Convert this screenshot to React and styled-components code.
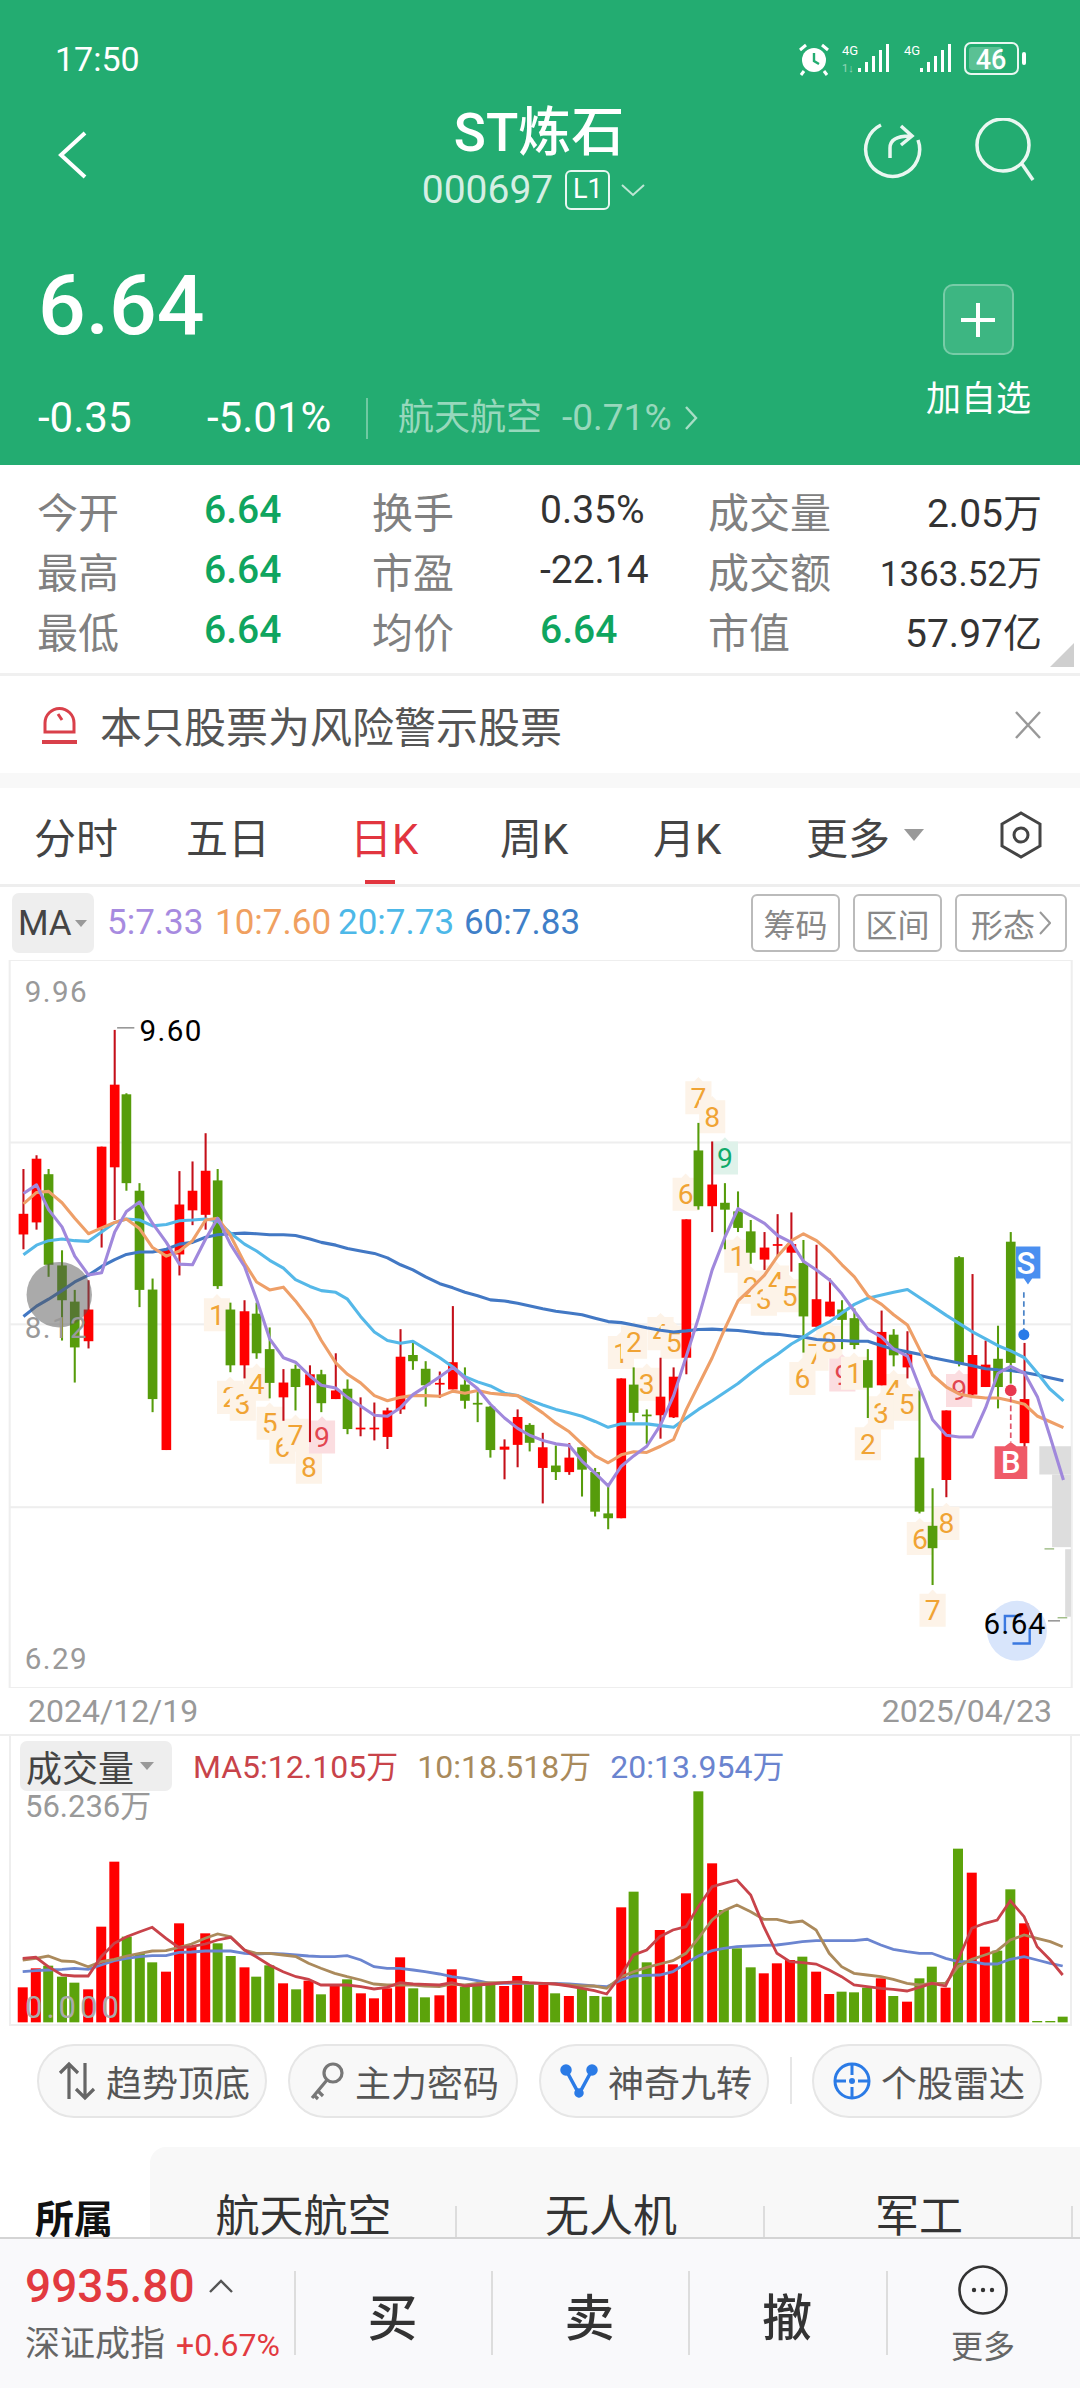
import React from "react"
import styled, { createGlobalStyle } from "styled-components"

const GlobalStyle = createGlobalStyle`
  html, body { margin: 0; padding: 0; background: #fff; }
  body { font-family: Roboto, "Noto Sans CJK SC", sans-serif; }
`

const colors = { green: "#23ac71", up: "#ff0000", down: "#569c0b", quoteGreen: "#0fa55f", label: "#808080", text: "#333" }

const Page = styled.div`
  width: 1080px;
  height: 2388px;
  overflow: hidden;
  display: flex;
  flex-direction: column;
  background: #fff;
`
const Header = styled.header`
  height: 465px;
  background: ${colors.green};
  color: #fff;
  flex: none;
`
const StatusBar = styled.div`
  height: 118px;
  padding: 0 50px 0 55px;
  display: flex;
  align-items: center;
  justify-content: space-between;
  font-size: 34px;
`
const NavRow = styled.div`
  height: 110px;
  position: relative;
  display: flex;
  justify-content: center;
`
const NavBack = styled.svg`
  position: absolute;
  left: 56px;
  top: 12px;
`
const NavActions = styled.div`
  position: absolute;
  right: 41px;
  top: 0;
  display: flex;
  gap: 48px;
`
const TitleBlock = styled.div`
  display: flex;
  flex-direction: column;
  align-items: center;
  margin-left: -2px;
`
const Title = styled.div`
  font-size: 53px;
  font-weight: 500;
  line-height: 30px;
  height: 30px;
`
const CodeRow = styled.div`
  display: flex;
  align-items: center;
  margin: 19px 0 0 -8px;
  font-size: 39px;
  line-height: 46px;
  color: rgba(255, 255, 255, 0.82);
`
const LevelTag = styled.span`
  margin-left: 12px;
  width: 45px;
  height: 40px;
  box-sizing: border-box;
  border: 2px solid rgba(255, 255, 255, 0.9);
  border-radius: 6px;
  font-size: 27px;
  line-height: 35px;
  text-align: center;
  color: #fff;
`
const QuoteRow = styled.div`
  display: flex;
  justify-content: space-between;
  padding: 36px 49px 0 38px;
`
const Price = styled.div`
  font-size: 84px;
  font-weight: 500;
  line-height: 84px;
`
const ChangeRow = styled.div`
  margin-top: 49px;
  display: flex;
  align-items: center;
  font-size: 42px;
  line-height: 42px;
`
const ChangeValue = styled.span`
  width: ${(p) => p.$w}px;
`
const SectorDivider = styled.span`
  width: 2px;
  height: 41px;
  background: rgba(255, 255, 255, 0.35);
  margin: 0 30px 0 31px;
`
const SectorName = styled.span`
  font-size: 36px;
  color: rgba(255, 255, 255, 0.55);
`
const SectorChange = styled.span`
  margin-left: 20px;
  font-size: 37px;
  color: rgba(255, 255, 255, 0.55);
`
const AddBlock = styled.div`
  display: flex;
  flex-direction: column;
  align-items: center;
  margin-top: 20px;
`
const AddButton = styled.div`
  width: 71px;
  height: 71px;
  box-sizing: border-box;
  border: 2px solid rgba(255, 255, 255, 0.3);
  border-radius: 10px;
  background: rgba(255, 255, 255, 0.12);
  display: flex;
  align-items: center;
  justify-content: center;
`
const AddLabel = styled.div`
  margin-top: 25px;
  font-size: 35px;
  line-height: 40px;
`

const StatGrid = styled.div`
  flex: none;
  height: 211px;
  box-sizing: border-box;
  padding: 15px 38px 0 37px;
  border-bottom: 3px solid #f0f0f0;
  position: relative;
  display: grid;
  grid-template-columns: 167px 168px 168px 168px 130px 1fr;
  grid-auto-rows: 60px;
  align-items: center;
  font-size: 41px;
`
const StatLabel = styled.span`
  color: ${colors.label};
`
const StatValue = styled.span`
  color: ${(p) => (p.$green ? colors.quoteGreen : colors.text)};
  font-size: ${(p) => p.$size || 39}px;
  font-weight: ${(p) => (p.$green ? 500 : 400)};
  text-align: ${(p) => (p.$right ? "right" : "left")};
  white-space: nowrap;
`
const CornerMark = styled.span`
  position: absolute;
  right: 6px;
  bottom: 6px;
  width: 0;
  height: 0;
  border-left: 24px solid transparent;
  border-bottom: 24px solid #cfcfcf;
`
const WarnRow = styled.div`
  flex: none;
  height: 97px;
  padding: 0 38px 0 42px;
  display: flex;
  align-items: center;
  color: #555;
  font-size: 42px;
  gap: 23px;
`
const WarnText = styled.span`
  flex: 1;
  white-space: nowrap;
`
const GrayBand = styled.div`
  flex: none;
  height: 15px;
  background: #f8f8f8;
`
const Tabs = styled.div`
  flex: none;
  height: 99px;
  box-sizing: border-box;
  padding-left: 34px;
  border-bottom: 3px solid #eee;
  display: grid;
  grid-template-columns: 152px 164px 150px 153px 153px 194px auto;
  align-items: center;
  font-size: 42px;
  color: #444;
`
const Tab = styled.div`
  position: relative;
  display: flex;
  align-items: center;
  height: 100%;
  padding-bottom: 2px;
  box-sizing: border-box;
  color: ${(p) => (p.$active ? "#e2353f" : "#444")};
  white-space: nowrap;
  ${(p) =>
    p.$active &&
    `&::after {
      content: "";
      position: absolute;
      left: 15px;
      bottom: 0;
      width: 30px;
      height: 4px;
      background: #e2353f;
    }`}
`
const Caret = styled.span`
  display: inline-block;
  width: 0;
  height: 0;
  margin-left: ${(p) => p.$gap ?? 14}px;
  border-left: ${(p) => p.$size ?? 10}px solid transparent;
  border-right: ${(p) => p.$size ?? 10}px solid transparent;
  border-top: ${(p) => (p.$size ?? 10) * 1.2}px solid #999;
`
const LegendRow = styled.div`
  flex: none;
  height: 73px;
  box-sizing: border-box;
  padding: 6px 13px 0 12px;
  display: flex;
  align-items: flex-start;
  font-size: 35px;
`
const Chip = styled.div`
  height: ${(p) => p.$h}px;
  width: ${(p) => p.$w}px;
  box-sizing: border-box;
  padding-left: 6px;
  border-radius: 7px;
  background: #eee;
  color: #444;
  display: flex;
  align-items: center;
  flex: none;
`
const MaValue = styled.span`
  color: ${(p) => p.$color};
  line-height: 60px;
  width: ${(p) => p.$w}px;
  white-space: nowrap;
`
const ToolGroup = styled.div`
  margin-left: auto;
  display: flex;
  gap: 13px;
`
const ToolButton = styled.div`
  width: ${(p) => p.$w}px;
  height: 58px;
  box-sizing: border-box;
  border: 2px solid #bbb;
  border-radius: 6px;
  color: #888;
  font-size: 32px;
  display: flex;
  align-items: center;
  justify-content: center;
  gap: 4px;
  margin-top: 1px;
`
const PriceChart = styled.svg`
  display: block;
  flex: none;
  width: 1080px;
  height: 728px;
`
const DateRow = styled.div`
  flex: none;
  height: 48px;
  box-sizing: border-box;
  padding: 0 28px;
  border-bottom: 2px solid #eee;
  display: flex;
  align-items: center;
  justify-content: space-between;
  color: #999;
  font-size: 32px;
`
const VolumePanel = styled.div`
  flex: none;
  height: 291px;
  position: relative;
  font-size: 32px;
`
const VolumeChart = styled.svg`
  position: absolute;
  left: 0;
  top: 0;
`
const VolumeLegend = styled.div`
  position: relative;
  display: flex;
  align-items: center;
  padding: 5px 0 0 20px;
  white-space: nowrap;
`
const VolumeValue = styled.span`
  color: ${(p) => p.$color};
  margin-left: ${(p) => p.$gap}px;
  padding-bottom: 4px;
`
const VolumeMax = styled.div`
  position: relative;
  margin: 0 0 0 25px;
  line-height: 32px;
  font-size: 31px;
  color: #999;
`
const PillRow = styled.div`
  flex: none;
  height: 120px;
  box-sizing: border-box;
  padding: 17px 0 0 37px;
  display: flex;
  align-items: flex-start;
  gap: 21px;
`
const Pill = styled.div`
  width: 230px;
  height: 74px;
  box-sizing: border-box;
  border: 2px solid #e6e6e6;
  border-radius: 37px;
  background: #f8f8f8;
  padding-left: 19px;
  display: flex;
  align-items: center;
  gap: 10px;
  color: #555;
  font-size: 36px;
  white-space: nowrap;
`
const PillDivider = styled.span`
  width: 2px;
  height: 47px;
  margin: 13px 0 0 0;
  background: #e6e6e6;
`
const SectorRow = styled.div`
  flex: none;
  height: 90px;
  overflow: hidden;
  display: flex;
  align-items: stretch;
`
const SectorLabel = styled.div`
  width: 150px;
  box-sizing: border-box;
  padding: 48px 0 0 35px;
  font-size: 39px;
  font-weight: 700;
  line-height: 50px;
  color: #111;
`
const SectorTabs = styled.div`
  flex: 1;
  background: #f8f8f8;
  border-top-left-radius: 16px;
  display: grid;
  grid-template-columns: 307px 308px 308px;
`
const SectorTab = styled.div`
  position: relative;
  font-size: 44px;
  line-height: 56px;
  padding-top: 42px;
  text-align: center;
  color: #333;
  ${(p) =>
    p.$divider &&
    `&::after {
      content: "";
      position: absolute;
      right: 0;
      top: 59px;
      width: 2px;
      height: 31px;
      background: #ddd;
    }`}
`
const BottomBar = styled.nav`
  flex: none;
  height: 151px;
  box-sizing: border-box;
  border-top: 2px solid #d4d4d4;
  background: #f9f9fb;
  display: grid;
  grid-template-columns: 294px 197px 197px 198px 194px;
`
const IndexCell = styled.div`
  padding: 22px 0 0 25px;
`
const IndexValue = styled.div`
  display: flex;
  align-items: center;
  gap: 13px;
  font-size: 46px;
  font-weight: 500;
  line-height: 50px;
  color: #e23a3f;
`
const IndexMeta = styled.div`
  margin-top: 12px;
  white-space: nowrap;
  font-size: 35px;
  line-height: 44px;
  color: #666;
`
const IndexChange = styled.span`
  margin-left: 11px;
  font-size: 32px;
  color: #e23a3f;
`
const ActionCell = styled.div`
  position: relative;
  display: flex;
  flex-direction: column;
  align-items: center;
  justify-content: ${(p) => (p.$small ? "flex-start" : "center")};
  font-size: ${(p) => (p.$small ? 32 : 50)}px;
  font-weight: ${(p) => (p.$small ? 400 : 500)};
  color: ${(p) => (p.$small ? "#666" : "#333")};
  padding: ${(p) => (p.$small ? "26px 0 0" : "0")};
  &::before {
    content: "";
    position: absolute;
    left: 0;
    top: 32px;
    width: 2px;
    height: 84px;
    background: #ddd;
  }
`
const MoreLabel = styled.span`
  line-height: 40px;
  margin-top: 12px;
`

const VB_W = 3136
const VB_H = 2114

// [x, wickTop, wickBottom, bodyTop, bodyBottom, color]
const candles = [
  [68,607,840,737,797,"r"],[106,567,783,577,762,"r"],[141,607,920,622,885,"g"],[180,843,1105,887,988,"g"],
  [217,958,1227,992,1125,"g"],[257,930,1128,1015,1107,"r"],[295,542,835,542,778,"r"],[333,203,755,362,602,"r"],
  [367,387,670,390,648,"g"],[405,648,1008,670,958,"g"],[443,925,1313,957,1275,"g"],[483,840,1423,840,1423,"r"],
  [521,613,916,710,855,"r"],[559,585,770,670,727,"r"],[597,503,783,612,740,"r"],[632,607,955,640,947,"g"],
  [669,995,1197,1015,1177,"g"],[710,988,1215,1020,1177,"r"],[745,995,1158,1027,1142,"g"],[783,1067,1273,1130,1228,"g"],
  [823,1188,1338,1227,1270,"r"],[858,1175,1308,1187,1240,"g"],[900,1177,1400,1203,1235,"r"],[933,1190,1313,1203,1287,"g"],
  [975,1142,1275,1250,1275,"r"],[1009,1218,1377,1245,1362,"g"],[1047,1270,1383,1358,1362,"r"],[1087,1285,1395,1358,1362,"r"],
  [1125,1300,1420,1308,1385,"r"],[1163,1072,1318,1152,1305,"r"],[1199,1110,1190,1147,1165,"g"],[1236,1165,1297,1187,1235,"g"],
  [1277,1195,1272,1228,1233,"r"],[1315,1005,1247,1168,1247,"r"],[1350,1183,1303,1233,1280,"g"],[1387,1253,1342,1286,1291,"g"],
  [1424,1295,1445,1297,1423,"g"],[1465,1392,1508,1413,1422,"r"],[1503,1305,1473,1327,1408,"r"],[1538,1345,1427,1350,1402,"g"],
  [1576,1373,1578,1415,1475,"r"],[1614,1410,1510,1468,1487,"g"],[1653,1403,1495,1445,1487,"r"],[1690,1415,1558,1415,1480,"g"],
  [1728,1475,1616,1487,1602,"g"],[1766,1520,1653,1607,1621,"g"],[1804,1215,1621,1215,1621,"r"],[1840,1183,1340,1233,1315,"g"],
  [1878,1305,1405,1320,1325,"g"],[1918,1155,1390,1268,1322,"r"],[1956,1183,1330,1210,1328,"r"],[1993,753,1203,753,1155,"r"],
  [2028,473,725,553,715,"g"],[2068,527,790,652,715,"r"],[2105,648,840,705,725,"g"],[2143,672,790,730,778,"g"],
  [2180,755,882,788,850,"g"],[2220,790,900,835,870,"r"],[2258,738,860,825,830,"r"],[2298,733,905,825,850,"r"],
  [2333,813,1140,880,1035,"g"],[2371,827,1065,985,1065,"r"],[2410,925,1035,992,1035,"r"],[2445,988,1130,1015,1045,"g"],
  [2481,1012,1130,1040,1118,"g"],[2520,1130,1330,1162,1242,"g"],[2560,1018,1235,1080,1235,"r"],[2595,1072,1180,1088,1148,"g"],
  [2635,1078,1215,1145,1183,"r"],[2670,1250,1607,1445,1602,"g"],[2708,1534,1815,1643,1708,"g"],[2748,1308,1560,1308,1510,"r"],
  [2785,860,1180,863,1170,"g"],[2824,912,1265,1147,1262,"r"],[2862,1105,1240,1175,1240,"r"],[2898,1062,1302,1158,1240,"g"],
  [2935,790,1230,818,1170,"g"],[2975,1112,1415,1275,1403,"r"],
]

const off = (pts) => pts.map(([x, y]) => [x + 1568, y])

const ma5 = [[68,678],[106,653],[141,725],[180,775],[217,860],[257,915],[295,908],[333,790],[367,730],[405,703],[443,765],[483,820],[521,883],[559,885],[597,810],[632,750],[669,825],[710,890],[745,985],[783,1100],[823,1155],[858,1168],[900,1208],[933,1235],[975,1243],[1009,1270],[1047,1295],[1087,1322],[1125,1325],[1163,1300],[1199,1262],[1236,1238],[1277,1210],[1315,1183],[1350,1215],[1387,1245],[1424,1290],[1465,1330],[1503,1360],[1538,1380],
  ...off([[8,1395],[46,1405],[85,1410],[122,1455],[160,1490],[198,1527],[236,1470],[272,1440],[310,1412],[350,1350],[388,1265],[425,1150],[460,1040],[500,900],[537,805],[575,722],[612,742],[652,765],[690,800],[730,820],[765,875],[803,900],[842,930],[877,970],[913,1020],[952,1072],[992,1095],[1027,1130],[1067,1150],[1102,1240],[1140,1335],[1180,1380],[1217,1385],[1256,1385],[1294,1300],[1330,1200],[1367,1180],[1407,1200],[1445,1270],[1480,1380],[1520,1510]])]
const ma10 = [[68,708],[106,675],[141,672],[180,705],[217,750],[257,795],[295,778],[333,762],[367,752],[405,780],[443,835],[483,860],[521,845],[559,815],[597,755],[632,750],[669,800],[710,880],[745,935],[783,958],[823,950],[858,990],[900,1045],[933,1105],[975,1170],[1009,1203],[1047,1228],[1087,1265],[1125,1280],[1163,1270],[1199,1265],[1236,1265],[1277,1267],[1315,1252],[1350,1258],[1387,1250],[1424,1258],[1465,1262],[1503,1265],
  ...off([[8,1315],[46,1345],[85,1370],[122,1405],[160,1440],[198,1460],[236,1437],[272,1428],[310,1430],[350,1412],[388,1392],[425,1305],[460,1235],[500,1155],[537,1070],[575,990],[612,955],[652,915],[690,860],[730,815],[765,795],[803,815],[842,848],[877,885],[913,920],[952,975],[992,1000],[1027,1030],[1067,1060],[1102,1130],[1140,1205],[1180,1240],[1217,1260],[1256,1268],[1294,1272],[1330,1272],[1367,1280],[1407,1290],[1445,1325],[1480,1340],[1520,1358]])]
const ma20 = [[68,856],[106,828],[141,815],[180,810],[217,815],[257,817],[295,790],[333,762],[367,752],[405,755],[443,772],[483,768],[521,757],[559,755],[597,752],[632,758],[669,793],[710,825],[745,845],[783,872],[823,895],[858,928],[900,948],[933,960],[975,965],[1009,985],[1047,1035],[1087,1080],[1125,1105],[1163,1113],[1199,1107],[1236,1130],[1277,1155],[1315,1182],[1350,1210],[1387,1225],[1424,1237],[1465,1258],[1503,1265],
  ...off([[8,1292],[46,1305],[85,1315],[122,1325],[160,1340],[198,1357],[236,1347],[272,1347],[310,1347],[350,1352],[388,1357],[425,1330],[460,1305],[500,1280],[537,1255],[575,1230],[612,1200],[652,1170],[690,1145],[730,1115],[765,1095],[803,1070],[842,1050],[877,1025],[913,1000],[952,982],[992,973],[1027,965],[1067,957],[1102,980],[1140,1005],[1180,1032],[1217,1055],[1256,1080],[1294,1100],[1330,1120],[1367,1135],[1407,1155],[1445,1200],[1480,1245],[1520,1280]])]
const ma60 = [[68,1035],[106,1005],[141,985],[180,960],[217,935],[257,915],[295,890],[333,870],[367,855],[405,848],[443,848],[483,840],[521,825],[559,820],[597,805],[632,798],[669,795],[710,793],[745,795],[783,798],[823,798],[858,800],[900,810],[933,820],[975,828],[1009,838],[1047,845],[1087,852],[1125,865],[1163,885],[1199,900],[1236,920],[1277,940],[1315,952],[1350,965],[1387,975],[1424,987],[1465,990],[1503,997],
  ...off([[8,1013],[46,1020],[85,1025],[122,1030],[160,1040],[198,1050],[236,1053],[272,1060],[310,1068],[350,1075],[388,1080],[425,1077],[460,1073],[500,1072],[537,1074],[575,1076],[612,1080],[652,1085],[690,1087],[730,1092],[765,1095],[803,1102],[842,1104],[877,1105],[913,1107],[952,1107],[992,1120],[1027,1130],[1067,1138],[1102,1145],[1140,1155],[1180,1163],[1217,1170],[1256,1178],[1294,1187],[1330,1190],[1367,1192],[1407,1198],[1445,1205],[1480,1213],[1520,1222]])]

// digit, x, y (center), kind
const badges = [
  [1,630,1030],[2,668,1270],[3,705,1290],[4,745,1232],[5,783,1345],[6,820,1415],[7,858,1380],[8,897,1473],[9,935,1385,"sell"],
  ...[[1,235,1140],[2,273,1110],[3,310,1232],[4,350,1085],[5,388,1110],[6,423,680],[7,460,400],[8,500,455],[9,537,575,"top"],
    [1,573,860],[2,612,950],[3,650,985],[4,685,935],[5,725,975],[6,762,1215],[7,800,1145],[8,840,1110],[9,878,1205,"sell"],
    [1,912,1200],[2,952,1405],[3,990,1315],[4,1027,1250],[5,1065,1290],[9,1217,1250,"sell"],
    [6,1103,1680],[8,1180,1636],[7,1140,1888]].map(([d, x, y, k]) => [d, x + 1568, y, k]),
]

const badgeColor = { sell: ["#fbdde0", "#e2454f"], top: ["#dff2ea", "#0faa6a"] }

const Line = ({ pts, color, width = 9 }) => (
  <polyline points={pts.map((p) => p.join(",")).join(" ")} fill="none" stroke={color} strokeWidth={width} strokeLinejoin="round" />
)

const Candle = ({ c }) => {
  const [x, wt, wb, bt, bb, kind] = c
  const fill = kind === "r" ? colors.up : colors.down
  const wick = kind === "r" ? "#c4101a" : colors.down
  return (
    <g>
      <rect x={x - 3} y={wt} width={6} height={wb - wt} fill={wick} />
      <rect x={x - 14} y={bt} width={28} height={Math.max(bb - bt, 5)} fill={fill} />
    </g>
  )
}

const Badge = ({ b }) => {
  const [d, x, y, kind] = b
  const [bg, fg] = badgeColor[kind] || ["#fdf3e8", "#f0a334"]
  return (
    <g>
      <path d={`M${x - 38} ${y - 48}H${x - 12}L${x} ${y - 60}L${x + 12} ${y - 48}H${x + 38}V${y + 48}H${x - 38}Z`} fill={bg} />
      <text x={x} y={y + 29} fontSize="82" textAnchor="middle" fill={fg}>{d}</text>
    </g>
  )
}

const ChartLabel = styled.text`
  font-family: Roboto, sans-serif;
  font-size: ${(p) => p.$size || 86}px;
  fill: ${(p) => p.$color || "#999"};
  letter-spacing: ${(p) => p.$spacing || 4}px;
`

function CandleChart() {
  const grid = [530, 1058, 1589]
  return (
    <PriceChart viewBox={`0 0 ${VB_W} ${VB_H}`}>
      <rect x="28" y="0" width="3084" height="2114" fill="#fff" stroke="#eee" strokeWidth="6" />
      {grid.map((y) => (
        <rect key={y} x="28" y={y - 3} width="3084" height="6" fill="#eee" />
      ))}
      <rect x="3018" y="1412" width="92" height="82" fill="#ddd" />
      <rect x="3055" y="1494" width="55" height="211" fill="#ddd" />
      <rect x="3093" y="1711" width="17" height="196" fill="#ddd" />
      <rect x="3033" y="1708" width="28" height="4" fill="#9dbb84" />
      <rect x="3071" y="1908" width="28" height="4" fill="#9dbb84" />
      {badges.map((b, i) => <Badge key={i} b={b} />)}
      {candles.map((c, i) => <Candle key={i} c={c} />)}
      <Line pts={ma60} color="#4278c4" />
      <Line pts={ma20} color="#55b8e8" />
      <Line pts={ma10} color="#ee9f68" />
      <Line pts={ma5} color="#a088dc" />
      <ChartLabel x="72" y="122">9.96</ChartLabel>
      <ChartLabel x="72" y="2059">6.29</ChartLabel>
      <rect x="340" y="195" width="50" height="4" fill="#888" />
      <ChartLabel x="405" y="235" $color="#000">9.60</ChartLabel>
      <circle cx="172" cy="972" r="95" fill="#555" opacity="0.5" />
      <ChartLabel x="72" y="1097">8.12</ChartLabel>
      {/* sell flag */}
      <path d="M2950 832h71v93h-24l-12 17l-12-17h-23z" fill="#4a8ff0" />
      <ChartLabel x="2952" y="912" $color="#fff" $size={90} $spacing={0} fontWeight="500">S</ChartLabel>
      <line x1="2973" y1="965" x2="2973" y2="1075" stroke="#4a84c8" strokeWidth="5" strokeDasharray="16 10" />
      <circle cx="2973" cy="1088" r="16" fill="#2a7be8" />
      {/* buy flag */}
      <circle cx="2935" cy="1250" r="17" fill="#e8384f" />
      <line x1="2935" y1="1268" x2="2935" y2="1400" stroke="#e0566a" strokeWidth="5" strokeDasharray="16 10" />
      <path d="M2888 1412h30l17-12l17 12h31v95h-95z" fill="#ef5a68" />
      <ChartLabel x="2907" y="1490" $color="#fff" $size={90} $spacing={0} fontWeight="500">B</ChartLabel>
      {/* latest price */}
      <circle cx="2953" cy="1948" r="87" fill="#d8e5fb" />
      <path d="M2918 1955v-50h48M2940 1985h50v-45" fill="none" stroke="#3a78e0" strokeWidth="7" />
      <ChartLabel x="2856" y="1957" $color="#000">6.64</ChartLabel>
      <rect x="3043" y="1917" width="35" height="4" fill="#888" />
    </PriceChart>
  )
}

const volumeBars = [
  [892,"r"],[835,"r"],[827,"g"],[860,"g"],[878,"g"],[898,"r"],[710,"r"],[515,"r"],[740,"g"],[790,"g"],
  [817,"g"],[845,"r"],[700,"r"],[770,"r"],[730,"r"],[760,"g"],[798,"g"],[832,"r"],[860,"g"],[826,"g"],
  [880,"r"],[898,"g"],[872,"r"],[913,"g"],[888,"r"],[868,"g"],[910,"r"],[925,"r"],[895,"r"],[802,"r"],
  [895,"g"],[922,"g"],[916,"r"],[838,"r"],[890,"g"],[885,"g"],[880,"g"],[888,"r"],[858,"r"],[880,"g"],
  [885,"r"],[910,"g"],[918,"r"],[895,"g"],[918,"g"],[920,"g"],[652,"r"],[605,"g"],[817,"g"],[720,"r"],
  [823,"r"],[610,"r"],[304,"g"],[520,"r"],[660,"g"],[775,"g"],[832,"g"],[850,"r"],[820,"r"],[810,"r"],
  [800,"g"],[845,"r"],[912,"r"],[905,"g"],[907,"g"],[893,"g"],[865,"r"],[918,"g"],[935,"r"],[865,"g"],
  [830,"g"],[893,"r"],[476,"g"],[548,"r"],[770,"r"],[782,"g"],[598,"g"],[700,"r"],[993,"g"],[993,"g"],[980,"g"],
]
const volX = [33,52,70,90,108,128,147,166,184,203,221,241,260,278,298,316,335,355,372,391,411,430,448,466,486,504,524,543,562,581,600,617,638,656,675,693,712,732,751,768,789,806,826,845,863,881,902,920,939,958,977,996,1014,1034,1051,1070,1090,1109,1128,1147,1165,1185,1204,1222,1240,1259,1279,1297,1317,1335,1353,1373,1391,1411,1430,1448,1467,1487,1506,1525,1543]
const volRed = [805,802,830,855,858,858,800,760,740,725,712,745,773,770,762,750,742,780,800,825,845,860,868,885,885,885,890,897,892,878,882,883,885,878,888,885,882,878,875,878,880,882,888,895,902,912,855,795,780,740,720,710,650,590,580,570,615,710,790,815,818,822,840,860,885,890,895,898,903,892,880,888,810,715,700,690,632,680,770,810,855]
const volTan = [810,805,798,813,815,830,815,808,798,790,783,782,772,762,745,732,740,780,790,790,795,800,820,835,850,860,870,882,885,885,885,888,890,882,885,880,878,878,878,880,880,882,885,888,888,895,860,845,832,822,812,790,745,690,662,645,665,688,688,698,693,720,790,830,850,855,860,868,880,885,880,880,830,808,795,782,750,735,745,755,770]
const volBlue = [845,842,840,838,835,838,825,812,805,800,797,797,787,786,783,783,783,790,792,790,792,795,798,800,800,797,810,830,835,835,840,845,852,860,865,872,880,880,880,880,880,880,882,885,888,890,870,858,856,855,845,820,798,782,775,770,768,766,765,760,755,752,752,752,752,748,765,778,785,790,790,805,815,815,822,822,808,800,810,820,828]

// zoom coordinates of the volume panel -> page pixels inside the panel
const vx = (z) => z / 1.452
const vy = (z) => z / 3 - 46

const volumeLine = (ys) => ys.map((y, i) => `${vx(volX[i]).toFixed(1)},${vy(y).toFixed(1)}`).join(" ")

function VolumeBars() {
  const base = vy(997)
  return (
    <VolumeChart width="1080" height="291" viewBox="0 0 1080 291">
      <rect x="10" y="-2" width="1061" height="291" fill="#fff" stroke="#eee" strokeWidth="2" />
      {volumeBars.map(([top, kind], i) => (
        <rect key={i} x={vx(volX[i]) - 5} y={vy(top)} width="10" height={base - vy(top)} fill={kind === "r" ? colors.up : "#5ca30b"} />
      ))}
      <polyline points={volumeLine(volBlue)} fill="none" stroke="#6b85d0" strokeWidth="2.8" />
      <polyline points={volumeLine(volTan)} fill="none" stroke="#ab8a5c" strokeWidth="2.8" />
      <polyline points={volumeLine(volRed)} fill="none" stroke="#c8434a" strokeWidth="2.8" />
      <ChartLabel x="25" y="282" $size={31} $color="#aaa" $spacing={0}>0.000</ChartLabel>
    </VolumeChart>
  )
}

const StatusIcons = () => (
  <svg width="232" height="34" viewBox="0 0 232 34" fill="#fff">
    <circle cx="16" cy="18" r="12" fill="#fff" />
    <path d="M16 11v8l5 3" stroke={colors.green} strokeWidth="2.4" fill="none" />
    <path d="M2 8l6-5M30 8l-6-5M6 29l-3 4M26 29l3 4" stroke="#fff" strokeWidth="3" />
    {[0, 62].map((d, k) => (
      <g key={d} transform={`translate(${d} 0)`}>
        <text x={44} y={13} fontSize="13" fontFamily="Roboto">4G</text>
        {[[60, 26, 4], [67, 20, 10], [74, 14, 16], [81, 8, 22], [88, 2, 28]].map(([x, y, h]) => (
          <rect key={x} x={x} y={y} width="3" height={h} />
        ))}
        {k === 0 && <text x={44} y={30} fontSize="11" fontFamily="Roboto" opacity="0.5">1↓</text>}
      </g>
    ))}
    <rect x="167" y="1" width="53" height="31" rx="6" fill="none" stroke="#fff" strokeOpacity="0.9" strokeWidth="2" />
    <rect x="171" y="5" width="33" height="23" rx="3" fill="#fff" fillOpacity="0.25" />
    <rect x="224" y="10" width="4" height="13" rx="2" />
    <text x="193" y="27" fontSize="27" fontWeight="500" textAnchor="middle" fontFamily="Roboto">46</text>
  </svg>
)

const stats = [
  ["今开", "6.64", true, "换手", "0.35%", false, "成交量", "2.05万"],
  ["最高", "6.64", true, "市盈", "-22.14", false, "成交额", "1363.52万", 35],
  ["最低", "6.64", true, "均价", "6.64", true, "市值", "57.97亿"],
]

export default function App() {
  return (
    <Page>
      <GlobalStyle />
      <Header>
        <StatusBar>
          <span>17:50</span>
          <StatusIcons />
        </StatusBar>
        <NavRow>
          <NavBack width="32" height="50" viewBox="0 0 32 50" fill="none" stroke="#fff" strokeWidth="4">
            <path d="M29 3L5 25l24 22" />
          </NavBack>
          <TitleBlock>
            <Title>ST炼石</Title>
            <CodeRow>
              000697
              <LevelTag>L1</LevelTag>
              <svg width="38" height="14" viewBox="0 0 38 14" fill="none" stroke="#fff" strokeOpacity="0.7" strokeWidth="2">
                <path d="M16 2l11 10L38 2" transform="translate(-4 0)" />
              </svg>
            </CodeRow>
          </TitleBlock>
          <NavActions>
            <svg width="62" height="62" viewBox="0 0 62 62" fill="none" stroke="#fff" strokeOpacity="0.9" strokeWidth="3.5">
              <path d="M18 7A27 27 0 1 0 55 22" />
              <path d="M27 40V30c0-7 6-12 20-12M38 8l11 10-11 9" />
            </svg>
            <svg width="66" height="66" viewBox="0 0 66 66" fill="none" stroke="#fff" strokeOpacity="0.9" strokeWidth="3.5">
              <circle cx="30" cy="27" r="26" />
              <path d="M49 46l11 16" />
            </svg>
          </NavActions>
        </NavRow>
        <QuoteRow>
          <div>
            <Price>6.64</Price>
            <ChangeRow>
              <ChangeValue $w={169}>-0.35</ChangeValue>
              <ChangeValue $w={128}>-5.01%</ChangeValue>
              <SectorDivider />
              <SectorName>航天航空</SectorName>
              <SectorChange>-0.71%</SectorChange>
              <svg width="14" height="26" viewBox="0 0 14 26" fill="none" stroke="#fff" strokeOpacity="0.6" strokeWidth="2.4" style={{ marginLeft: 13 }}>
                <path d="M2 2l10 11L2 24" />
              </svg>
            </ChangeRow>
          </div>
          <AddBlock>
            <AddButton>
              <svg width="34" height="34" viewBox="0 0 34 34" stroke="#fff" strokeWidth="4">
                <path d="M17 0v34M0 17h34" />
              </svg>
            </AddButton>
            <AddLabel>加自选</AddLabel>
          </AddBlock>
        </QuoteRow>
      </Header>

      <StatGrid>
        {stats.map((r) => (
          <React.Fragment key={r[0]}>
            <StatLabel>{r[0]}</StatLabel>
            <StatValue $green={r[2]}>{r[1]}</StatValue>
            <StatLabel>{r[3]}</StatLabel>
            <StatValue $green={r[5]}>{r[4]}</StatValue>
            <StatLabel>{r[6]}</StatLabel>
            <StatValue $right $size={r[8]}>{r[7]}</StatValue>
          </React.Fragment>
        ))}
        <CornerMark />
      </StatGrid>

      <WarnRow>
        <svg width="35" height="38" viewBox="0 0 35 38" fill="none" stroke="#d9404a" strokeWidth="3">
          <path d="M3 26V17a14.5 14.5 0 0 1 29 0v9z" />
          <path d="M16 8l4 6" />
          <path d="M0 36h35" strokeWidth="4" />
        </svg>
        <WarnText>本只股票为风险警示股票</WarnText>
        <svg width="28" height="28" viewBox="0 0 28 28" stroke="#999" strokeWidth="2.5">
          <path d="M2 1l24 26M26 1L2 27" />
        </svg>
      </WarnRow>
      <GrayBand />

      <Tabs>
        <Tab>分时</Tab>
        <Tab>五日</Tab>
        <Tab $active>日K</Tab>
        <Tab>周K</Tab>
        <Tab>月K</Tab>
        <Tab>更多<Caret /></Tab>
        <Tab>
          <svg width="42" height="48" viewBox="0 0 42 48" fill="none" stroke="#444" strokeWidth="3">
            <path d="M21 2l19 11v22L21 46 2 35V13z" />
            <circle cx="21" cy="24" r="7" />
          </svg>
        </Tab>
      </Tabs>

      <LegendRow>
        <Chip $w={82} $h={60}>MA<Caret $size={6} $gap={3} /></Chip>
        <MaValue $color="#a78be0" $w={108} style={{ marginLeft: 13 }}>5:7.33</MaValue>
        <MaValue $color="#f0a060" $w={123}>10:7.60</MaValue>
        <MaValue $color="#4db8e8" $w={126}>20:7.73</MaValue>
        <MaValue $color="#3f7fc8" $w={113}>60:7.83</MaValue>
        <ToolGroup>
          <ToolButton $w={89}>筹码</ToolButton>
          <ToolButton $w={89}>区间</ToolButton>
          <ToolButton $w={112}>
            形态
            <svg width="12" height="26" viewBox="0 0 12 26" fill="none" stroke="#999" strokeWidth="2">
              <path d="M1 2l10 11L1 24" />
            </svg>
          </ToolButton>
        </ToolGroup>
      </LegendRow>

      <CandleChart />

      <DateRow>
        <span>2024/12/19</span>
        <span>2025/04/23</span>
      </DateRow>

      <VolumePanel>
        <VolumeBars />
        <VolumeLegend>
          <Chip $w={152} $h={50}>
            <span style={{ fontSize: 36 }}>成交量</span>
            <Caret $size={7} $gap={6} />
          </Chip>
          <VolumeValue $color="#c8434a" $gap={21}>MA5:12.105万</VolumeValue>
          <VolumeValue $color="#a98a5b" $gap={19}>10:18.518万</VolumeValue>
          <VolumeValue $color="#6a84cf" $gap={19}>20:13.954万</VolumeValue>
        </VolumeLegend>
        <VolumeMax>56.236万</VolumeMax>
      </VolumePanel>

      <PillRow>
        <Pill>
          <svg width="38" height="40" viewBox="0 0 38 40" fill="none" stroke="#666" strokeWidth="3.2">
            <path d="M11 38V3M2 12l9-9 9 9M27 2v35M18 28l9 9 9-9" />
          </svg>
          趋势顶底
        </Pill>
        <Pill>
          <svg width="36" height="40" viewBox="0 0 36 40" fill="none" stroke="#777" strokeWidth="3.2">
            <circle cx="24" cy="12" r="9" />
            <path d="M18 19L3 37M9 30l5 5M5 34l4 4" />
          </svg>
          主力密码
        </Pill>
        <Pill>
          <svg width="38" height="38" viewBox="0 0 38 38" fill="#2b7be6" stroke="#2b7be6" strokeWidth="3.5">
            <path d="M6 8l13 24L32 8" fill="none" />
            <circle cx="6" cy="8" r="4" />
            <circle cx="32" cy="8" r="4" />
            <circle cx="19" cy="31" r="3" />
          </svg>
          神奇九转
        </Pill>
        <PillDivider />
        <Pill style={{ marginLeft: -1 }}>
          <svg width="38" height="38" viewBox="0 0 38 38" fill="none" stroke="#2b7be6" strokeWidth="3">
            <circle cx="19" cy="19" r="17" />
            <path d="M19 2v11M19 25v11M2 19h11M25 19h11" />
            <circle cx="19" cy="19" r="3" fill="#2b7be6" stroke="none" />
          </svg>
          个股雷达
        </Pill>
      </PillRow>

      <SectorRow>
        <SectorLabel>所属</SectorLabel>
        <SectorTabs>
          <SectorTab $divider>航天航空</SectorTab>
          <SectorTab $divider>无人机</SectorTab>
          <SectorTab $divider>军工</SectorTab>
        </SectorTabs>
      </SectorRow>

      <BottomBar>
        <IndexCell>
          <IndexValue>
            9935.80
            <svg width="26" height="14" viewBox="0 0 26 14" fill="none" stroke="#555" strokeWidth="2.4">
              <path d="M2 13L13 2l11 11" />
            </svg>
          </IndexValue>
          <IndexMeta>深证成指<IndexChange>+0.67%</IndexChange></IndexMeta>
        </IndexCell>
        <ActionCell>买</ActionCell>
        <ActionCell>卖</ActionCell>
        <ActionCell>撤</ActionCell>
        <ActionCell $small>
          <svg width="50" height="50" viewBox="0 0 50 50" fill="#333">
            <circle cx="25" cy="25" r="23.5" fill="none" stroke="#333" strokeWidth="2.6" />
            <circle cx="16" cy="25" r="2.2" />
            <circle cx="25" cy="25" r="2.2" />
            <circle cx="34" cy="25" r="2.2" />
          </svg>
          <MoreLabel>更多</MoreLabel>
        </ActionCell>
      </BottomBar>
    </Page>
  )
}
